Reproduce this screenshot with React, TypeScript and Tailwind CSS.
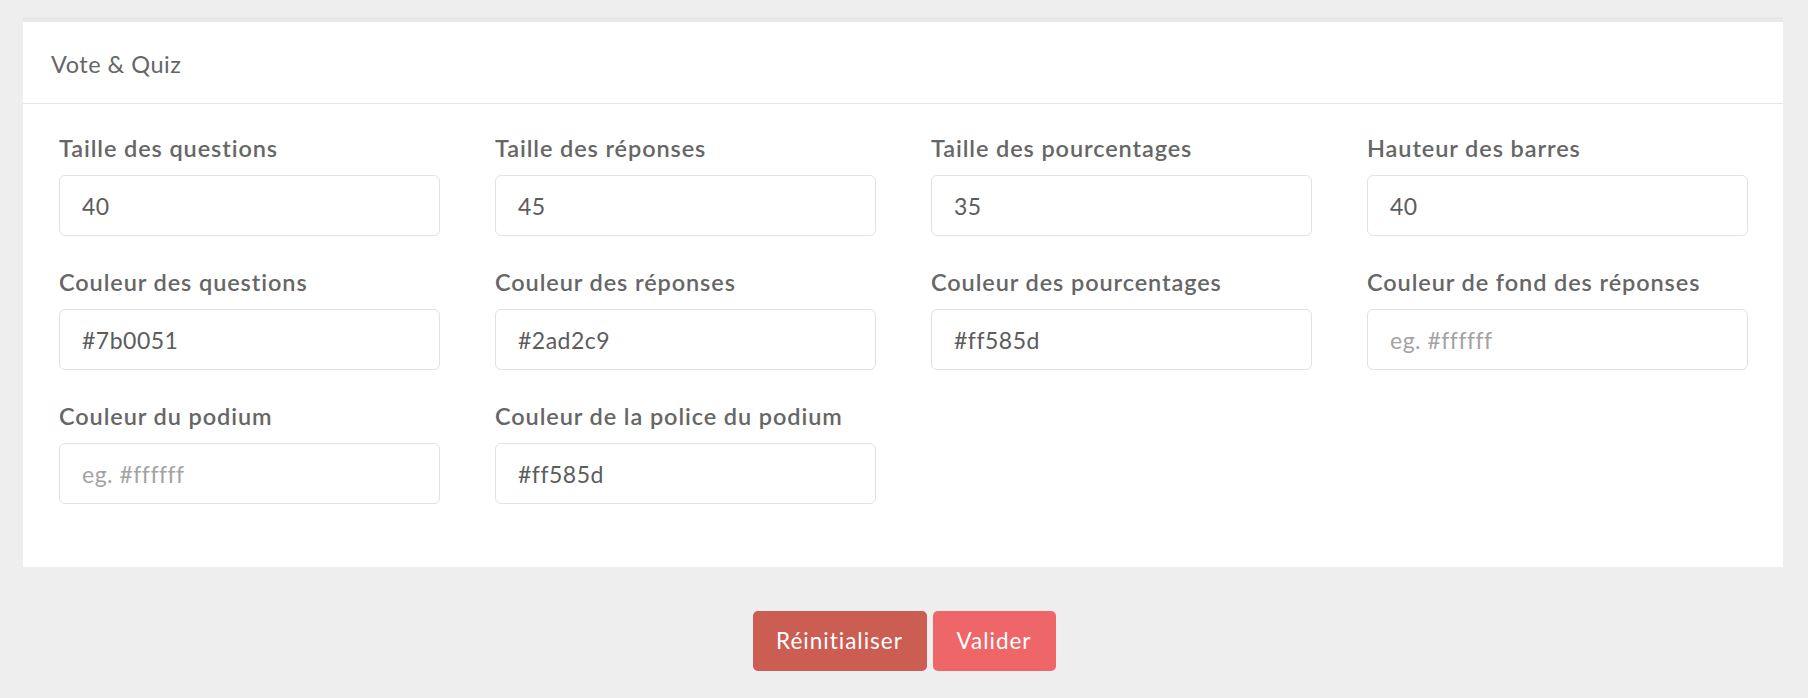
const FIELDS = [
  { label: "Taille des questions", value: "40" },
  { label: "Taille des réponses", value: "45" },
  { label: "Taille des pourcentages", value: "35" },
  { label: "Hauteur des barres", value: "40" },
  { label: "Couleur des questions", value: "#7b0051" },
  { label: "Couleur des réponses", value: "#2ad2c9" },
  { label: "Couleur des pourcentages", value: "#ff585d" },
  { label: "Couleur de fond des réponses", value: "" },
  { label: "Couleur du podium", value: "" },
  { label: "Couleur de la police du podium", value: "#ff585d" },
];

const Field = ({ label, value }: { label: string; value: string }) => (
  <div className="flex flex-col">
    <label className="text-[23.5px] leading-[30px] font-semibold text-[#666666] tracking-[0.9px] whitespace-nowrap">
      {label}
    </label>
    <input
      className="mt-[12px] h-[61px] w-full rounded-[6px] border border-[#e2e2e2] bg-white px-[22px] text-[23px] tracking-[0.5px] text-[#5c5c5c] outline-none placeholder:text-[#a3a3a3]"
      defaultValue={value}
      placeholder="eg. #ffffff"
    />
  </div>
);

export default function App() {
  return (
    <div
      className="min-h-[698px] w-full bg-[#eeeeee] pt-[17px] pb-[27px]"
      style={{ fontFamily: "Lato, 'Open Sans', sans-serif" }}
    >
      <div className="ml-[23px] mr-[25px] border-t-[5px] border-[#e8e8e8] bg-white">
        <div className="h-[82px] border-b border-[#e6e6e6] px-[28px] flex items-center">
          <p className="text-[23.5px] tracking-[0.5px] text-[#666666] mt-[4px]">Vote &amp; Quiz</p>
        </div>
        <div className="grid grid-cols-4 gap-x-[55px] gap-y-[31px] pl-[36px] pr-[35px] pt-[29px] pb-[63px]">
          {FIELDS.map((f) => (
            <Field key={f.label} label={f.label} value={f.value} />
          ))}
        </div>
      </div>
      <div className="mt-[44px] flex justify-center gap-[6px]">
        <button className="h-[60px] w-[174px] rounded-[5px] bg-[#cc5d52] text-[22.5px] tracking-[1px] text-white">
          Réinitialiser
        </button>
        <button className="h-[60px] w-[123px] rounded-[5px] bg-[#ee6668] text-[22.5px] tracking-[1px] text-white">
          Valider
        </button>
      </div>
    </div>
  );
}
